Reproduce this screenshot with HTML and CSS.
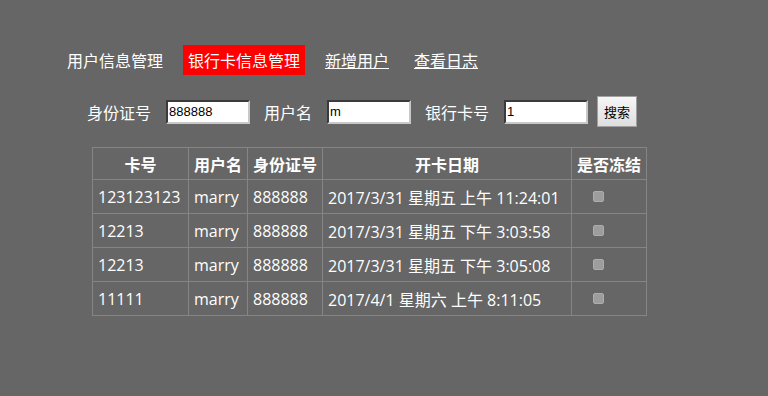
FILE: index.html
```html
<!DOCTYPE html>
<html lang="zh-CN">
<head>
<meta charset="utf-8">
<title>银行卡信息管理</title>
<link rel="stylesheet" href="styles.css">
</head>
<body>
<div class="page">
  <nav class="nav">
    <span class="nav-item">用户信息管理</span>
    <span class="nav-item active">银行卡信息管理</span>
    <a class="nav-item link" href="#">新增用户</a>
    <a class="nav-item link" href="#">查看日志</a>
  </nav>
  <form class="search">
    <label class="lbl">身份证号</label>
    <input class="inp" type="text" value="888888">
    <label class="lbl">用户名</label>
    <input class="inp" type="text" value="m">
    <label class="lbl">银行卡号</label>
    <input class="inp last" type="text" value="1">
    <button class="btn" type="button">搜索</button>
  </form>
  <table class="grid">
    <colgroup>
      <col class="c1"><col class="c2"><col class="c3"><col class="c4"><col class="c5">
    </colgroup>
    <thead>
      <tr><th>卡号</th><th>用户名</th><th>身份证号</th><th>开卡日期</th><th>是否冻结</th></tr>
    </thead>
    <tbody>
      <tr><td>123123123</td><td>marry</td><td>888888</td><td>2017/3/31 星期五 上午 11:24:01</td><td class="chk"><span class="box"></span></td></tr>
      <tr><td>12213</td><td>marry</td><td>888888</td><td>2017/3/31 星期五 下午 3:03:58</td><td class="chk"><span class="box"></span></td></tr>
      <tr><td>12213</td><td>marry</td><td>888888</td><td>2017/3/31 星期五 下午 3:05:08</td><td class="chk"><span class="box"></span></td></tr>
      <tr><td>11111</td><td>marry</td><td>888888</td><td>2017/4/1 星期六 上午 8:11:05</td><td class="chk"><span class="box"></span></td></tr>
    </tbody>
  </table>
</div>
</body>
</html>
```

FILE: styles.css
```css
html, body {
  margin: 0;
  padding: 0;
  background: #666666;
}
body {
  font-family: "Open Sans", "Noto Sans CJK SC", sans-serif;
  color: #ffffff;
  font-size: 16px;
}
.page {
  padding-top: 45px;
}
.nav {
  display: flex;
  gap: 15px;
  padding-left: 62px;
  height: 30px;
}
.nav-item {
  display: block;
  padding: 0 5px;
  line-height: 30px;
  height: 30px;
  color: #ffffff;
  font-family: "Noto Sans CJK SC", sans-serif;
  font-size: 16px;
}
.nav-item.active {
  background: #ff0000;
}
.nav-item.link {
  text-decoration: underline;
}
.search {
  display: flex;
  align-items: center;
  margin: 21px 0 0 87px;
  height: 31px;
}
.lbl {
  font-family: "Noto Sans CJK SC", sans-serif;
  font-size: 16px;
  color: #ffffff;
  margin-right: 15px;
}
.inp {
  box-sizing: border-box;
  width: 84px;
  height: 24px;
  margin: 0 14px 0 0;
  padding: 0 1px;
  border: 2px inset #a9a9a9;
  border-color: #8f8f8f #c8c8c8 #c8c8c8 #8f8f8f;
  background: #ffffff;
  color: #000000;
  font-family: "Liberation Sans", Arial, sans-serif;
  font-size: 13px;
}
.inp.last {
  margin-right: 9px;
}
.btn {
  box-sizing: border-box;
  width: 40px;
  height: 31px;
  padding: 0;
  border: 1px solid #a0a0a0;
  background: linear-gradient(#f6f6f6, #dedede);
  color: #000000;
  font-family: "Noto Sans CJK SC", sans-serif;
  font-size: 13px;
}
.grid {
  margin: 20px 0 0 92px;
  border-collapse: collapse;
  table-layout: fixed;
  width: 554px;
}
.c1 { width: 96px; }
.c2 { width: 59px; }
.c3 { width: 75px; }
.c4 { width: 249px; }
.c5 { width: 75px; }
.grid th,
.grid td {
  border: 1px solid #858585;
  padding: 0 0 0 5px;
  white-space: nowrap;
  overflow: hidden;
  font-size: 16px;
}
.grid th {
  height: 31px;
  text-align: center;
  padding: 0;
  font-family: "Noto Sans CJK SC", sans-serif;
  font-weight: bold;
}
.grid td {
  height: 33px;
  text-align: left;
}
.grid td.chk {
  padding-left: 21px;
  vertical-align: middle;
}
.box {
  display: block;
  box-sizing: border-box;
  width: 11px;
  height: 11px;
  background: #9d9d9d;
  border: 1px solid #adadad;
  border-radius: 2px;
}
```
